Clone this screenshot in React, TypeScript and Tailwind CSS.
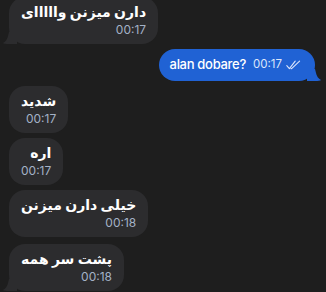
import React from 'react';

type Msg = { text: string; time: string; tail?: boolean };

const Tail = ({ side, color }: { side: 'left' | 'right'; color: string }) =>
  side === 'left' ? (
    <svg className="absolute bottom-0 -left-[6px]" width="14" height="12" viewBox="0 0 14 12">
      <path d="M14 0 L14 12 L6 12 Q1 12 0 11 Q4 9 5 4 L6 0 Z" fill={color} />
    </svg>
  ) : (
    <svg className="absolute bottom-0 -right-[6px]" width="14" height="12" viewBox="0 0 14 12">
      <path d="M0 0 L0 12 L8 12 Q13 12 14 11 Q10 9 9 4 L8 0 Z" fill={color} />
    </svg>
  );

const Incoming = ({ text, time, tail }: Msg) => (
  <div className="flex">
    <div className="relative ml-[9px] rounded-[16px] bg-[#2c2c2e] px-[12px] pt-[5px] pb-[6px]">
      <div dir="rtl" className="text-right text-[14px] font-bold leading-[20px] text-white">
        {text}
      </div>
      <div className="text-right text-[12px] leading-[16px] text-[#a4b2c6]">{time}</div>
      {tail && <Tail side="left" color="#2c2c2e" />}
    </div>
  </div>
);

const DoubleCheck = () => (
  <svg width="15" height="10" viewBox="0 0 15 10" fill="none" stroke="#dbe5fb" strokeWidth="1.1" strokeLinecap="round" strokeLinejoin="round">
    <path d="M0.8 5.6 L3.4 8.6 L9.2 1.2" />
    <path d="M5 8.6 L5.6 8.6 L13.6 1.2" />
  </svg>
);

export default function App() {
  const font = { fontFamily: 'Inter, "DejaVu Sans", sans-serif' };
  return (
    <div className="h-[292px] w-[326px] overflow-hidden bg-[#1e1e1e]" style={font}>
      <div className="-mt-[3px] flex flex-col gap-[5px]">
        <Incoming text="دارن میزنن وااااای" time="00:17" tail />
        <div className="flex justify-end">
          <div className="relative mr-[11px] flex h-[32px] items-center gap-[7px] rounded-[16px] bg-[#2062d4] pl-[11px] pr-[14px]">
            <span className="text-[13px] font-medium tracking-[-0.3px] text-white">alan dobare?</span>
            <span className="flex items-center gap-[4px] text-[11.5px] text-[#dbe5fb]">
              00:17
              <DoubleCheck />
            </span>
            <Tail side="right" color="#2062d4" />
          </div>
        </div>
        <Incoming text="شدید" time="00:17" />
        <Incoming text="اره" time="00:17" />
        <Incoming text="خیلی دارن میزنن" time="00:18" />
        <div className="mt-[2px]">
          <Incoming text="پشت سر همه" time="00:18" tail />
        </div>
      </div>
    </div>
  );
}
